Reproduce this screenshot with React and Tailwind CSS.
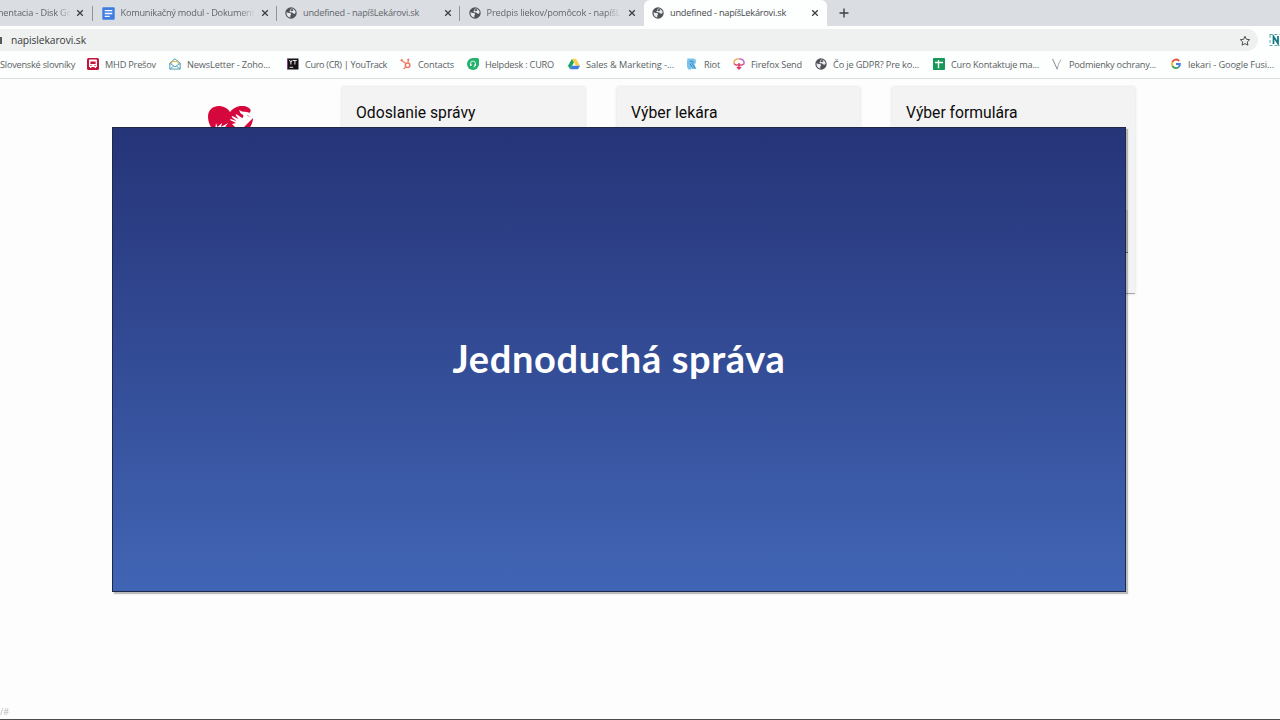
import { useLayoutEffect, useRef, useState } from 'react'

// Text set to an exact width by spreading the difference over its letters
function FitText({ width, className = '', children }) {
  const ref = useRef(null)
  const [spacing, setSpacing] = useState(0)

  useLayoutEffect(() => {
    const natural = ref.current.getBoundingClientRect().width
    setSpacing((width - natural) / children.length)
  }, [])

  return (
    <span ref={ref} className={`whitespace-pre ${className}`} style={{ letterSpacing: `${spacing}px` }}>
      {children}
    </span>
  )
}

function GlobeIcon() {
  return (
    <svg viewBox="0 0 12 12" className="size-3 shrink-0">
      <circle cx="6" cy="6" r="5.7" fill="#505357" />
      <path d="M1.500 5.300 3.500 5.900l1.800.2.900 1.400-.9 1v2.100C3 10.300 1.300 8.200 1.500 5.300ZM6.300 1.500l-1.100 1 .2 1.200-1.200.8.800.7 2.300.3.900 1.100 1.700.1.800-1.500C10.300 3.200 8.500 1.600 6.300 1.500Z" fill="#e9ebee" />
      <path d="M5.600 2.600 7.500 2l1 1-1.400 1.300-1.100-.4Z" fill="#505357" />
    </svg>
  )
}

function DocsIcon() {
  return (
    <svg viewBox="0 0 13 13" className="size-[13px] shrink-0">
      <rect x="0.300" y="0.300" width="12.400" height="12.400" rx="1" fill="#3f7de0" />
      <path d="M2.700 3.700h7.600M2.700 6.500h7.600M2.700 9.300h5" stroke="#fff" strokeWidth="1.300" />
    </svg>
  )
}

function BusIcon() {
  return (
    <svg viewBox="0 0 12 12" className="size-3 shrink-0">
      <rect width="12" height="12" rx="1.500" fill="#c3153c" />
      <path d="M2 2.500q0-.9.900-.9h6.200q.9 0 .9.900v6.400H9v1.200H7.600V9h-3.200v1.100H3V8.900H2Z" fill="#fff" />
      <path d="M3.400 3.400h5.200v2.600H3.400ZM3.400 7.100h1.200v.8H3.400ZM7.400 7.100h1.200v.8H7.400Z" fill="#c3153c" />
    </svg>
  )
}

function MailIcon() {
  return (
    <svg viewBox="0 0 12 12" className="size-3 shrink-0" fill="none">
      <path d="M.8 5 6 .900 11.200 5v6.100H.8Z" stroke="#4d9fb8" />
      <path d="M2.700 6V3.600h6.500V6" stroke="#d8b450" />
      <path d="m1 5.500 5 3.300 5-3.300M1 11l3.700-3M11 11 7.300 8" stroke="#4d9fb8" strokeWidth=".9" />
    </svg>
  )
}

function YouTrackIcon() {
  return (
    <svg viewBox="0 0 12 12" className="size-3 shrink-0">
      <rect x=".5" y=".5" width="11" height="11" fill="#151015" />
      <path d="M0 .5h1v11H0Z" fill="#8d3e8c" />
      <path d="m2.400 2 1.500 2.300L5.400 2M3.900 4.200v2.300M6 2.500h3.800M7.900 2.500v4M2.600 9.300h3.600" stroke="#fff" strokeWidth=".9" fill="none" />
    </svg>
  )
}

function HubspotIcon() {
  return (
    <svg viewBox="0 0 12 12" className="size-3 shrink-0" fill="none" stroke="#ee7a63">
      <circle cx="7.600" cy="7.200" r="2.300" strokeWidth="1.500" />
      <path d="M8.200 4.800V2M6 5.700 1.700 2.300M6 8.700l-1.700 1.700" strokeWidth="1.200" />
      <circle cx="8.300" cy="1.700" r=".7" fill="#ee7a63" />
      <circle cx="1.600" cy="2.200" r=".8" fill="#ee7a63" />
      <circle cx="4.100" cy="10.500" r=".4" />
    </svg>
  )
}

function HelpdeskIcon() {
  return (
    <svg viewBox="0 0 12 12" className="size-3 shrink-0">
      <path d="M6 0h4.500Q12 0 12 1.500V6A6 6 0 1 1 6 0Z" fill="#25b36b" />
      <path d="M3.500 6.700V5.600a2.500 2.500 0 0 1 5 0v1.100M8.400 7.400q0 1.500-2 1.500" fill="none" stroke="#fff" strokeWidth=".8" />
      <path d="M3.100 5.700h1.400v2.300H3.100ZM7.500 5.700h1.400v2.300H7.500Z" fill="#fff" />
    </svg>
  )
}

function DriveIcon() {
  return (
    <svg viewBox="0 0 12 12" className="size-3 shrink-0">
      <path d="M4 .7 0 7.700l2 3.500 4-7Z" fill="#1da362" />
      <path d="M4 .7h4l4 7H8Z" fill="#ffcf48" />
      <path d="M4 7.700h8l-2 3.500H2Z" fill="#3d7be0" />
    </svg>
  )
}

function RiotIcon() {
  return (
    <svg viewBox="0 0 12 12" className="size-3 shrink-0">
      <path d="M1.500.500h5.500q3 0 3 3 0 2-1.500 3L10.500 11H7.300L5.500 8v3.500H2.500L1 9V3Z" fill="#7cc4ea" />
      <path d="M3.500 3.300h3.300q1 1.500-.6 2.200L9 10.500M3.800 5.500 7 10.800" stroke="#3688c6" fill="none" />
    </svg>
  )
}

function SendIcon() {
  return (
    <svg viewBox="0 0 12 12" className="size-3 shrink-0" fill="none" strokeWidth="1.400">
      <path d="M.8 5.600Q.700.900 6 .900" stroke="#f5a544" />
      <path d="M6 .9q5.300 0 5.200 4.700" stroke="#b75bc5" />
      <path d="M.8 5.600 3 7h6l2.200-1.400" stroke="#e14c76" />
      <path d="M6 5v5.800M4 9l2 2 2-2" stroke="#dc3669" />
    </svg>
  )
}

function SheetIcon() {
  return (
    <svg viewBox="0 0 12 12" className="size-3 shrink-0">
      <rect width="12" height="12" rx=".8" fill="#179858" />
      <path d="M2 4.500h8M5.500 2v8.200" stroke="#fff" strokeWidth="1.400" />
    </svg>
  )
}

function VIcon() {
  return (
    <svg viewBox="0 0 12 12" className="size-3 shrink-0" fill="none" stroke="#84878a">
      <path d="m1.500.9 4.800 10.400" strokeWidth="1" />
      <path d="M6.400 11.300q.2-5 3.500-9.800" strokeWidth=".7" />
    </svg>
  )
}

function GoogleIcon() {
  return (
    <svg viewBox="0 0 12 12" className="size-3 shrink-0" fill="none" strokeWidth="1.900">
      <path d="M9.200 3A4 4 0 0 0 2.400 4.100" stroke="#e44b3e" />
      <path d="M2.400 4.100a4 4 0 0 0 0 3.800" stroke="#f3b92b" />
      <path d="M2.400 7.900a4 4 0 0 0 6.200 1.200" stroke="#3aa657" />
      <path d="M8.600 9.100A4 4 0 0 0 9.900 6H6" stroke="#467fdf" />
    </svg>
  )
}

function CloseIcon() {
  return (
    <svg viewBox="0 0 8 8" className="size-2 shrink-0">
      <path d="m1.200 1.200 5.600 5.600M6.800 1.200 1.200 6.800" stroke="#3d4043" strokeWidth="1.300" />
    </svg>
  )
}

const bookmarks = [
  { Icon: BusIcon, label: 'MHD Prešov', text: 51, slot: 'w-[82px]' },
  { Icon: MailIcon, label: 'NewsLetter - Zoho...', text: 83, slot: 'w-[118px]' },
  { Icon: YouTrackIcon, label: 'Curo (CR) | YouTrack', text: 82, slot: 'w-[113px]' },
  { Icon: HubspotIcon, label: 'Contacts', text: 36, slot: 'w-[67px]' },
  { Icon: HelpdeskIcon, label: 'Helpdesk : CURO', text: 69, slot: 'w-[101px]' },
  { Icon: DriveIcon, label: 'Sales & Marketing -...', text: 88, slot: 'w-[118px]' },
  { Icon: RiotIcon, label: 'Riot', text: 16, slot: 'w-[47px]' },
  { Icon: SendIcon, label: 'Firefox Send', text: 51, slot: 'w-[82px]' },
  { Icon: GlobeIcon, label: 'Čo je GDPR? Pre ko...', text: 86, slot: 'w-[118px]' },
  { Icon: SheetIcon, label: 'Curo Kontaktuje ma...', text: 88, slot: 'w-[118px]' },
  { Icon: VIcon, label: 'Podmienky ochrany...', text: 87, slot: 'w-[119px]' },
  { Icon: GoogleIcon, label: 'lekari - Google Fusi...', text: 86, slot: 'w-[110px]' },
]

function Tab({ Icon, label, text, active, divider, fade }) {
  return (
    <div className={`flex h-[26px] w-[183.500px] shrink-0 items-center pl-[8.500px] pr-2 ${active ? 'rounded-t-md bg-[#fdfefe] text-[#45494d]' : 'text-[#62666c]'}`}>
      <Icon />
      <div className={`ml-1.5 flex w-[134px] shrink-0 ${fade ? 'mask-r-from-88%' : ''}`}>
        <FitText width={text}>{label}</FitText>
      </div>
      <div className="ml-auto flex items-center">
        <CloseIcon />
      </div>
      {divider && <div className="-mr-2 ml-[7px] h-[15px] w-px bg-[#92969c]" />}
    </div>
  )
}

function TabStrip() {
  return (
    <div className="flex h-[26px] bg-[#dadde2]">
      <div className="flex w-[93px] shrink-0 items-center text-[#62666c]">
        <div className="flex w-[71px] mask-r-from-80%">
          <FitText width={77} className="-ml-[5px]">mentacia - Disk Go</FitText>
        </div>
        <div className="ml-[5px] flex">
          <CloseIcon />
        </div>
        <div className="ml-[8px] h-[15px] w-px bg-[#92969c]" />
      </div>
      <Tab Icon={DocsIcon} label="Komunikačný modul - Dokument" text={134} divider fade />
      <Tab Icon={GlobeIcon} label="undefined - napíšLekárovi.sk" text={116} divider />
      <Tab Icon={GlobeIcon} label="Predpis liekov/pomôcok - napíšL" text={134} fade />
      <Tab Icon={GlobeIcon} label="undefined - napíšLekárovi.sk" text={116} active />
      <svg viewBox="0 0 10 10" className="ml-3 mt-2 size-2.5">
        <path d="M5 .500v9M.500 5h9" stroke="#3d4043" strokeWidth="1.400" />
      </svg>
    </div>
  )
}

function AddressBar() {
  return (
    <div className="flex h-[28px] items-center justify-between bg-[#fdfefe]">
      <div className="flex h-[22px] w-[1258px] items-center rounded-r-full bg-[#eff1f0] pt-px">
        <div className="h-[7px] w-[2px] bg-[#55595c]" />
        <FitText width={75} className="ml-[9px] text-[10.300px] text-[#35393c]">napislekarovi.sk</FitText>
        <svg viewBox="0 0 12 12" className="ml-auto mr-[7px] size-3">
          <path d="m6 1.300 1.400 3 3.300.4-2.400 2.200.6 3.300L6 8.600l-2.900 1.600.6-3.300L1.300 4.700l3.300-.4Z" fill="none" stroke="#4b4f53" />
        </svg>
      </div>
      <svg viewBox="0 0 11 12" className="h-3 w-[11px]">
        <path d="M1 1v10M.500.500H11M.500 11.500H11" stroke="#5fa9af" strokeDasharray="3 2" fill="none" />
        <path d="M4.500 10V2.500L9 9.500V2" stroke="#0d7882" strokeWidth="1.700" fill="none" />
      </svg>
    </div>
  )
}

function BookmarksBar() {
  return (
    <div className="flex h-[25px] items-center overflow-hidden border-b border-[#dcdedf] bg-[#fdfefe] pb-[3px] text-[#5a5e62]">
      <div className="flex w-[87px] shrink-0">
        <FitText width={75}>Slovenské slovníky</FitText>
      </div>
      {bookmarks.map(({ Icon, label, text, slot }) => (
        <div key={label} className={`flex shrink-0 items-center gap-1.5 ${slot}`}>
          <Icon />
          <FitText width={text}>{label}</FitText>
        </div>
      ))}
    </div>
  )
}

function HeartLogo() {
  return (
    <svg viewBox="0 0 46 42" className="h-[42px] w-[46px]">
      <path d="M23 41C10 30 0 22 0 11 0-2 16-3 22 6 27-1 37-2 42 3 44 5 41 8 39 9l6 3Q45 18 40 24Z" fill="#d5073c" />
      <path d="m31 4 3 1.500 5 .5 3 1-3 3 7 1-6 6-5 5-8-1-3-3 4-1-6-3 .500-1 6 2-5-4 1-1 6 3-3-4 1-.7 6 4 1-3-3-2Z" fill="#fff" />
      <path d="m7 24 1-7 1.500 4 4.500-4-1 4 7-4-5 7Z" fill="#fff" />
    </svg>
  )
}

function Card({ title, width }) {
  return (
    <section className="flex h-[207px] w-[243px] flex-col items-end border-b border-[#a4a6a8] bg-[#f3f3f3] shadow-[0_0_3px_0_rgba(0,0,0,0.14)]">
      <h2 className="flex w-full px-3.5 pt-[15px] font-['Roboto'] text-[15.700px] leading-[22px] text-[#0c0c0c]">
        <FitText width={width}>{title}</FitText>
      </h2>
      <div className="mr-[7px] mt-[86px] h-[43px] w-[215px] border-b border-[#777] bg-[#d6d8db]" />
    </section>
  )
}

export default function App() {
  return (
    <div className="relative flex h-[720px] w-[1280px] flex-col overflow-hidden bg-[#fdfdfd] font-['Open_Sans','Noto_Sans',sans-serif] text-[9.200px]">
      <TabStrip />
      <AddressBar />
      <BookmarksBar />

      <main className="flex grow items-start pl-[207px] pt-2">
        <div className="mt-[19px] w-[135px] shrink-0 pl-px">
          <HeartLogo />
        </div>
        <div className="flex gap-8">
          <Card title="Odoslanie správy" width={119.5} />
          <Card title="Výber lekára" width={86.5} />
          <Card title="Výber formulára" width={111.5} />
        </div>
      </main>

      <footer className="flex h-[16px] items-center border-b border-[#4c4c4c] text-[9px] text-[#bdbdbd]">/#</footer>

      <div className="absolute left-[112px] top-[127px] flex h-[465px] w-[1014px] items-center justify-center border border-[#20284a] bg-linear-to-b from-[#263478] to-[#4165b5] pb-[3px] shadow-[2px_2px_1px_rgba(0,0,0,0.25)]">
        <FitText width={333} className="font-['Lato'] text-[38px] font-bold text-white">Jednoduchá správa</FitText>
      </div>
    </div>
  )
}
